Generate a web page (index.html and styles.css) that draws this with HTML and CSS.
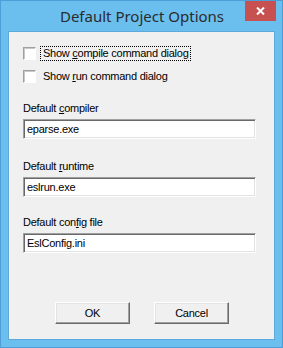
FILE: index.html
```html
<!DOCTYPE html>
<html>
<head>
<meta charset="utf-8">
<link rel="stylesheet" href="styles.css">
</head>
<body>
<div class="window">
  <div class="titlebar">
    <div class="spacer"></div>
    <div class="title">Default Project Options</div>
    <div class="tb-right">
      <div class="close">
        <svg width="9" height="8" viewBox="0 0 9 8"><path d="M1 0.5 L8 7.5 M8 0.5 L1 7.5" stroke="#fff" stroke-width="2"/></svg>
      </div>
    </div>
  </div>
  <div class="client">
    <div class="checks">
      <div class="check-row"><span class="box"></span><span class="clabel focus">Show <u>c</u>ompile command dialog</span></div>
      <div class="check-row"><span class="box"></span><span class="clabel">Show <u>r</u>un command dialog</span></div>
    </div>
    <div class="field first">
      <div class="flabel">Default <u>c</u>ompiler</div>
      <div class="input">eparse.exe</div>
    </div>
    <div class="field second">
      <div class="flabel">Default <u>r</u>untime</div>
      <div class="input">eslrun.exe</div>
    </div>
    <div class="field third">
      <div class="flabel">Default con<u>f</u>ig file</div>
      <div class="input">EslConfig.ini</div>
    </div>
    <div class="buttons">
      <div class="btn">OK</div>
      <div class="btn">Cancel</div>
    </div>
  </div>
</div>
</body>
</html>
```
FILE: styles.css
```css
html, body {
  margin: 0;
  padding: 0;
  background: #ffffff;
}
.window {
  width: 283px;
  height: 348px;
  box-sizing: border-box;
  background: #6abfef;
  border: 1px solid #4f9dd6;
  display: flex;
  flex-direction: column;
  padding: 0 7px 7px 7px;
}
.titlebar {
  height: 30px;
  display: grid;
  grid-template-columns: 1fr auto 1fr;
  align-items: start;
  margin: 0 -1px 0 0;
}
.title {
  font-family: "Noto Sans", "Open Sans", sans-serif;
  font-size: 15px;
  color: #2b2b2b;
  line-height: 20px;
  padding-top: 5px;
  white-space: nowrap;
}
.tb-right {
  display: flex;
  justify-content: flex-end;
}
.close {
  width: 31px;
  height: 20px;
  background: #c75050;
  display: flex;
  align-items: center;
  justify-content: center;
}
.close svg { display: block; }
.client {
  flex: 1;
  background: #f0f0f0;
  border: 1px solid #5ea9dc;
  box-sizing: border-box;
  padding: 15px 0 0 14px;
  font-family: "Liberation Sans", Arial, sans-serif;
  font-size: 11px;
  letter-spacing: -0.25px;
  color: #000;
}
.checks {
  display: flex;
  flex-direction: column;
  gap: 10px;
}
.check-row {
  display: flex;
  align-items: center;
  height: 13px;
}
.box {
  width: 13px;
  height: 13px;
  box-sizing: border-box;
  background: #fff;
  border-top: 1px solid #a0a0a0;
  border-left: 1px solid #a0a0a0;
  border-right: 1px solid #ffffff;
  border-bottom: 1px solid #ffffff;
  box-shadow: inset 1px 1px 0 #c8c8c8;
}
.clabel {
  margin-left: 4px;
  padding: 0 1px 0 2px;
  line-height: 13px;
  border: 1px dotted transparent;
}
.clabel.focus {
  border-color: #000;
}
.field.first { margin-top: 19px; }
.field.second { margin-top: 21px; }
.field.third { margin-top: 19px; }
.flabel {
  line-height: 13px;
  height: 13px;
}
.input {
  margin-top: 4px;
  width: 233px;
  height: 20px;
  box-sizing: border-box;
  background: #fff;
  border-top: 1px solid #a0a0a0;
  border-left: 1px solid #a0a0a0;
  border-right: 1px solid #ffffff;
  border-bottom: 1px solid #ffffff;
  box-shadow: inset 1px 1px 0 #696969, inset -1px -1px 0 #e3e3e3;
  padding: 2px 0 0 3px;
  line-height: 14px;
}
.buttons {
  display: flex;
  gap: 24px;
  margin: 49px 0 0 32px;
}
.btn {
  width: 75px;
  height: 22px;
  box-sizing: border-box;
  background: #f0f0f0;
  border-top: 1px solid #ffffff;
  border-left: 1px solid #ffffff;
  border-right: 1px solid #696969;
  border-bottom: 1px solid #696969;
  box-shadow: inset -1px -1px 0 #a0a0a0, inset 1px 1px 0 #e3e3e3;
  display: flex;
  align-items: center;
  justify-content: center;
}
```
